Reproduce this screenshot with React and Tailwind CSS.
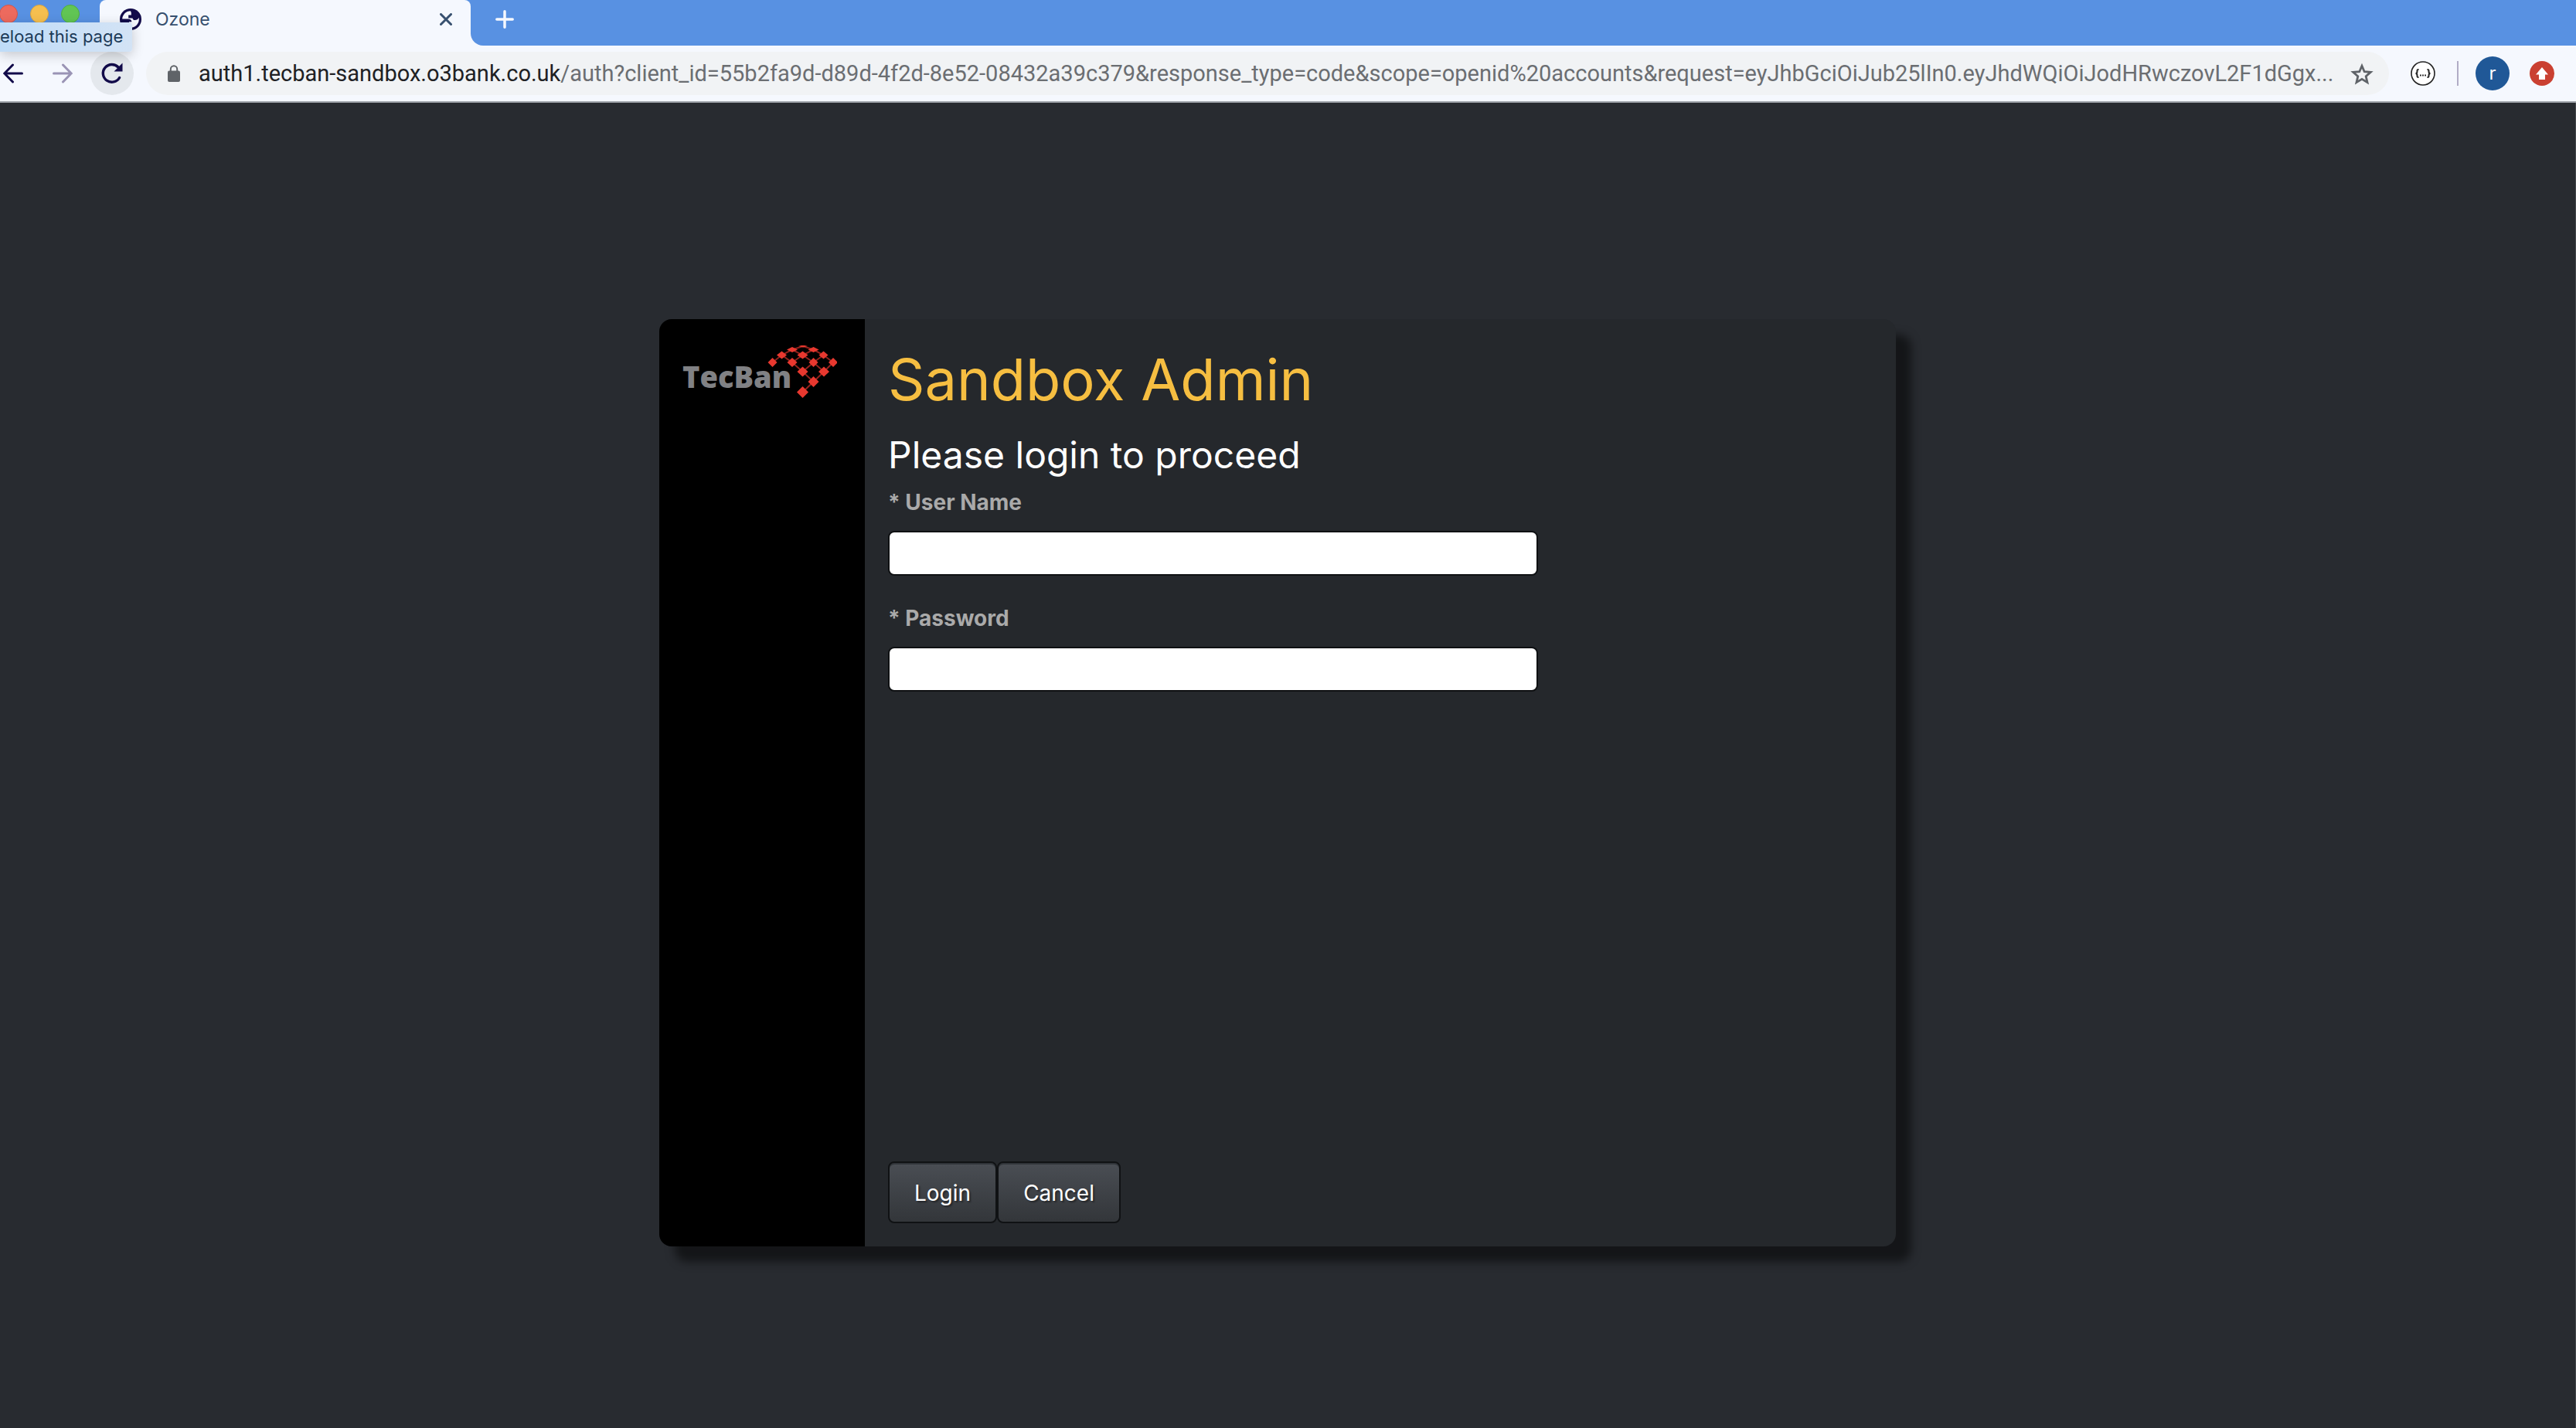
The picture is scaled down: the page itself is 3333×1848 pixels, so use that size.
const inter = "font-['Inter','Liberation_Sans',sans-serif]";

function TrafficLights() {
  return (
    <div className="flex w-[129px] shrink-0 gap-4 pt-1.5">
      <button aria-label="Close window" className="-ml-px size-6 rounded-full border border-[#d5544a] bg-[#ed6a5e]" />
      <button aria-label="Minimise window" className="size-6 rounded-full border border-[#dba43f] bg-[#f5bf4f]" />
      <button aria-label="Zoom window" className="size-6 rounded-full border border-[#4fae41] bg-[#61c554]" />
    </div>
  );
}

function GlobeIcon() {
  return (
    <svg viewBox="0 0 28 28" className="size-7 shrink-0">
      <circle cx="14" cy="14" r="14" fill="#120b4a" />
      <path
        d="M14 3.200C8 3.200 3.400 8 3.200 13.600h7.600c2.600 0 4.400 1.400 4.600 3.600H12v4h-1.500v3c1.100.4 2.300.6 3.500.6 6 0 10.800-4.800 10.800-10.800 0-.8-.1-1.500-.2-2.200-1 2.200-2.600 3.200-4.800 3.200-1.900 0-3.100-1-3.300-2.600h-5.300V8.600h3.600V5.400z"
        fill="#f5f8fe"
      />
    </svg>
  );
}

function TabStrip() {
  return (
    <div className="flex h-[59px] bg-[#5891e2]">
      <TrafficLights />
      <div className="flex w-[480px] items-start rounded-t-lg bg-[#f5f8fe] pt-[11px] pr-6 pl-[26px]">
        <GlobeIcon />
        <span className="ml-[18px] flex-1 text-[23px] leading-7 text-[#37506f]">Ozone</span>
        <button aria-label="Close tab" className="mt-1.5 text-[#37506f]">
          <svg viewBox="0 0 16 16" className="size-4" stroke="currentColor" strokeWidth="3" strokeLinecap="round">
            <path d="M1.500 1.500l13 13M14.500 1.500l-13 13" />
          </svg>
        </button>
      </div>
      <div className="flex-1 bg-[#f5f8fe]">
        <div className="h-full rounded-bl-2xl bg-[#5891e2] pt-[13px] pl-8">
          <button aria-label="New tab" className="block text-[#f5f8fe]">
            <svg viewBox="0 0 24 24" className="size-6" stroke="currentColor" strokeWidth="3.500" strokeLinecap="round">
              <path d="M12 1.800v20.400M1.800 12h20.400" />
            </svg>
          </button>
        </div>
      </div>
    </div>
  );
}

function Toolbar() {
  return (
    <div className="flex h-[74px] items-center border-b-2 border-[#9fa3a9] bg-[#f5f8fe]">
      <button aria-label="Back" className="ml-1 text-[#120b4a]">
        <svg viewBox="0 0 26 26" className="size-[26px]" fill="none" stroke="currentColor" strokeWidth="3" strokeLinecap="round">
          <path d="M24.500 13H2M12.500 2L1.800 13l10.700 11" />
        </svg>
      </button>
      <button aria-label="Forward" className="ml-[38px] text-[#9a94b5]">
        <svg viewBox="0 0 26 26" className="size-[26px]" fill="none" stroke="currentColor" strokeWidth="3" strokeLinecap="round">
          <path d="M1.500 13H24M13.500 2l10.700 11-10.700 11" />
        </svg>
      </button>
      <button aria-label="Reload this page" className="ml-[23px] flex size-14 shrink-0 items-center justify-center rounded-full bg-[#e4e8ed] text-[#120b4a]">
        <svg viewBox="0 0 28 28" className="size-7" fill="none">
          <path d="M23.600 19.500A11.400 11.400 0 1 1 22 6" stroke="currentColor" strokeWidth="3.400" strokeLinecap="round" />
          <path d="M27.500 0.500v11h-11z" fill="currentColor" />
        </svg>
      </button>
      <div className="ml-4 flex h-14 min-w-0 flex-1 items-center rounded-full bg-[#f1f3f5] pr-5 pl-7">
        <svg viewBox="0 0 16 22" className="h-[22px] w-4 shrink-0">
          <path d="M3.800 9V5.500a4.200 4.200 0 0 1 8.400 0V9" fill="none" stroke="#5f6368" strokeWidth="2" />
          <rect y="7.500" width="16" height="14.500" rx="2" fill="#5f6368" />
        </svg>
        <a
          href="#address"
          className="ml-6 min-w-0 flex-1 overflow-hidden font-['Roboto','Inter',sans-serif] text-[29px] leading-9 whitespace-nowrap text-[#6b6e72]"
        >
          <span className="text-[#202124]">auth1.tecban-sandbox.o3bank.co.uk</span>/auth?client_id=55b2fa9d-d89d-4f2d-8e52-08432a39c379&amp;response_type=code&amp;scope=openid%20accounts&amp;request=eyJhbGciOiJub25lIn0.eyJhdWQiOiJodHRwczovL2F1dGgx...
        </a>
        <button aria-label="Bookmark this page" className="shrink-0">
          <svg viewBox="0 0 30 29" className="h-[29px] w-[30px]" fill="none" stroke="#5f6368" strokeWidth="2.800">
            <path d="M15 4.200l3.200 7.500 8.100.7-6.100 5.300 1.800 7.900-7-4.200-7 4.200 1.800-7.900-6.100-5.300 8.100-.7z" />
          </svg>
        </button>
      </div>
      <button aria-label="Formatter extension" className="ml-7 shrink-0">
        <svg viewBox="0 0 32 32" className="size-8" fill="none" stroke="#222">
          <circle cx="16" cy="16" r="15" fill="#fff" strokeWidth="1.600" />
          <path d="M10.500 11c-2.200 0-2 .9-2 2.500s-.5 2.500-2 2.500c1.500 0 2 .9 2 2.500s-.2 2.500 2 2.500M21.500 11c2.200 0 2 .9 2 2.500s.5 2.500 2 2.500c-1.500 0-2 .9-2 2.500s.2 2.500-2 2.500" strokeWidth="2" />
          <path d="M12 18.500h1.800M15.100 18.500h1.800M18.200 18.500H20" strokeWidth="1.800" />
        </svg>
      </button>
      <div className="ml-7 h-8 w-0.5 bg-[#b1adc6]" />
      <button aria-label="Profile" className="ml-[22px] flex size-11 shrink-0 items-center justify-center rounded-full bg-[#205897] text-2xl leading-none text-white">
        r
      </button>
      <button aria-label="Update browser" className="mr-7 ml-[26px] shrink-0">
        <svg viewBox="0 0 32 32" className="size-8">
          <circle cx="16" cy="16" r="16" fill="#ca4031" />
          <path d="M16 8l8 9.500h-4V24h-8v-6.500H8z" fill="#fff" />
        </svg>
      </button>
    </div>
  );
}

function TecBanLogo() {
  const nodes = [
    [116.500, 22, 6, 6], [128.500, 12.500, 6.500, 5], [142, 5.500, 7, 3.500], [142, 22, 6.500, 6],
    [155.500, 12.500, 7, 5], [156, 1, 6, 1.500], [169.500, 5.500, 7, 3.500], [182.500, 12.500, 6, 5],
    [169.500, 22, 6, 6], [195, 22, 6, 6], [155.500, 34, 7, 6.500], [183, 34, 7, 6.500],
    [169.500, 47, 7, 7], [155.500, 60.500, 7.500, 7.500],
  ];
  return (
    <svg viewBox="0 0 200 68" className="h-[68px] w-[200px] overflow-hidden" role="img" aria-label="TecBan">
      <text x="0" y="55" fontFamily="'Open Sans', 'Noto Sans', sans-serif" fontWeight="800" fontSize="38" fill="#808184">
        TecBan
      </text>
      <path
        d="M116.500 22L128.500 12.500 142 5.500 156 1 169.500 5.500 182.500 12.500 195 22 183 34 155.500 60.500M128.500 12.500L142 22 155.500 34 169.500 47M142 5.500L155.500 12.500 169.500 22 183 34M169.500 5.500L155.500 12.500 142 22M182.500 12.500L169.500 22 155.500 34"
        fill="none"
        stroke="#8f221c"
        strokeWidth="2"
      />
      {nodes.map(([x, y, w, h]) => (
        <path
          key={`${x}-${y}`}
          d={`M${x - w} ${y}L${x} ${y - h}L${x + w} ${y}L${x} ${y + h}Z`}
          fill="#e8382f"
        />
      ))}
    </svg>
  );
}

function Field({ id, label, type }) {
  return (
    <div className="flex flex-col">
      <label htmlFor={id} className="text-[28px] leading-[42px] font-bold text-[#aaaaaa]">
        * {label}
      </label>
      <input id={id} type={type} className="mt-4 h-[58px] w-[841px] max-w-full rounded-lg border-2 border-[#0f1113] bg-white px-4 text-[28px] text-[#272b30] outline-none" />
    </div>
  );
}

function SlateButton({ children, type }) {
  return (
    <button
      type={type}
      className="h-20 rounded-lg border-2 border-[#101214] bg-linear-to-b from-[#4a4e54] to-[#33363a] px-8 pt-0.5 text-[28px] text-white shadow-[inset_0_2px_0_#303439] [text-shadow:2px_2px_2px_rgba(0,0,0,0.4)]"
    >
      {children}
    </button>
  );
}

export default function App() {
  return (
    <div className={`relative flex min-h-screen flex-col bg-[#282b30] ${inter}`}>
      <header>
        <TabStrip />
        <Toolbar />
      </header>
      <div role="tooltip" className="absolute top-[29px] left-0 h-[38px] overflow-hidden rounded-r-sm bg-linear-to-r from-[#bfdcf8] to-[#d3e3f5] pr-3 text-[22px] leading-9 text-[#1c3a57] shadow-[0_4px_16px_rgba(0,0,0,0.2)]">
        eload this page
      </div>
      <main className="flex flex-1 items-start justify-center border-r border-[#45484c] pt-[280px] pr-[26px] pb-20">
        <section className="flex min-h-[1200px] w-[1600px] max-w-full overflow-hidden rounded-2xl bg-[#25282c] shadow-[20px_20px_12px_rgba(0,0,0,0.5)]">
          <aside className="w-[266px] shrink-0 bg-black pt-[34px] pl-[30px]">
            <TecBanLogo />
          </aside>
          <form className="flex flex-1 flex-col pt-[34px] pr-8 pb-[30px] pl-[30px]" onSubmit={(e) => e.preventDefault()}>
            <h1 className="text-[74px] leading-[88px] text-[#f6be41]">Sandbox Admin</h1>
            <h2 className="mt-[22px] text-[48px] leading-[64px] text-white">Please login to proceed</h2>
            <div className="mt-2 flex flex-col gap-[34px]">
              <Field id="username" label="User Name" type="text" />
              <Field id="password" label="Password" type="password" />
            </div>
            <div className="mt-auto flex">
              <SlateButton type="submit">Login</SlateButton>
              <SlateButton type="button">Cancel</SlateButton>
            </div>
          </form>
        </section>
      </main>
    </div>
  );
}
